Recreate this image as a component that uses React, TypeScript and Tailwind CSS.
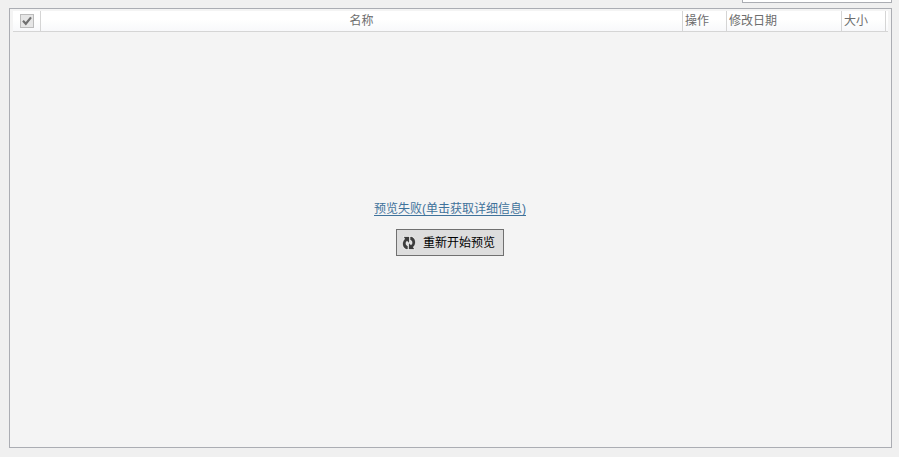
import React, { useState } from 'react';

const COLUMNS = [
  { label: '操作', width: 'w-11' },
  { label: '修改日期', width: 'w-[115px]' },
  { label: '大小', width: 'w-11' },
];

export default function App() {
  const [filter, setFilter] = useState('');

  return (
    <div className="flex h-screen flex-col overflow-hidden bg-[#f0f0f0] pl-[9px] pr-[7px] pb-[9px] font-['Liberation_Sans','Noto_Sans_CJK_SC',sans-serif] text-xs text-[#6d6d6d]">
      <div className="flex h-[3px] shrink-0 items-end justify-end overflow-hidden">
        <input
          type="text"
          aria-label="筛选"
          value={filter}
          onChange={(e) => setFilter(e.target.value)}
          className="h-6 w-[150px] shrink-0 border border-[#abadb3] bg-white px-1 outline-none"
        />
      </div>

      <main className="mt-[5px] flex min-h-0 flex-1 flex-col border border-[#abadb3] bg-[#f4f4f4] px-[3px] pt-0.5">
        <table className="w-full table-fixed border-separate border-spacing-0">
          <thead>
            <tr className="h-[21px] bg-linear-to-b from-white from-40% to-[#f7f8fa]">
              <th className="w-7 border-r border-b border-[#d5d5d5] p-0">
                <SelectAll />
              </th>
              <th className="border-r border-b border-[#d5d5d5] p-0 text-center leading-5 font-normal">名称</th>
              {COLUMNS.map((c) => (
                <th
                  key={c.label}
                  className={`${c.width} border-r border-b border-[#d5d5d5] p-0 pl-0.5 text-left leading-5 font-normal whitespace-nowrap`}
                >
                  {c.label}
                </th>
              ))}
              <td className="w-0.5 border-b border-[#d5d5d5] p-0"></td>
            </tr>
          </thead>
        </table>

        <div className="flex flex-1 flex-col items-center justify-center gap-2.5 pr-px pb-6">
          <a href="#details" className="leading-5 text-[#3f729b] underline underline-offset-2">
            预览失败(单击获取详细信息)
          </a>
          <button
            type="button"
            className="flex h-[27px] items-center gap-[7px] border border-[#707070] bg-[#dddddd] pr-2 pl-[5px] leading-4 text-black"
          >
            <RefreshIcon />
            重新开始预览
          </button>
        </div>
      </main>
    </div>
  );
}

function SelectAll() {
  return (
    <label className="relative mx-auto block size-3.5">
      <input
        type="checkbox"
        aria-label="全选"
        defaultChecked
        disabled
        className="peer block size-3.5 appearance-none border border-[#bcbcbc] bg-[#e6e6e6]"
      />
      <svg
        viewBox="0 0 14 14"
        className="pointer-events-none absolute inset-0 hidden size-3.5 peer-checked:block"
        fill="none"
        stroke="#707070"
        strokeWidth="2.2"
      >
        <path d="M3 6.8 L5.8 9.8 L11 3.4" />
      </svg>
    </label>
  );
}

const ARROW = 'M2 1 H7 V6.6 L5 4.7 C3 6 3 9.2 5.6 10.2 V13 H4.4 C0.2 11.6 -0.2 5.4 3.2 2.9 Z';

function RefreshIcon() {
  return (
    <svg viewBox="0 0 14 14" className="size-3.5 shrink-0" aria-hidden="true">
      <g stroke="#f5f5f5" strokeWidth="1.6" fill="#f5f5f5" strokeLinejoin="round">
        <path d={ARROW} />
        <path d={ARROW} transform="rotate(180 7 7)" />
      </g>
      <g fill="#3c3c3c" stroke="#3c3c3c" strokeWidth="0.3">
        <path d={ARROW} />
        <path d={ARROW} transform="rotate(180 7 7)" />
      </g>
    </svg>
  );
}
